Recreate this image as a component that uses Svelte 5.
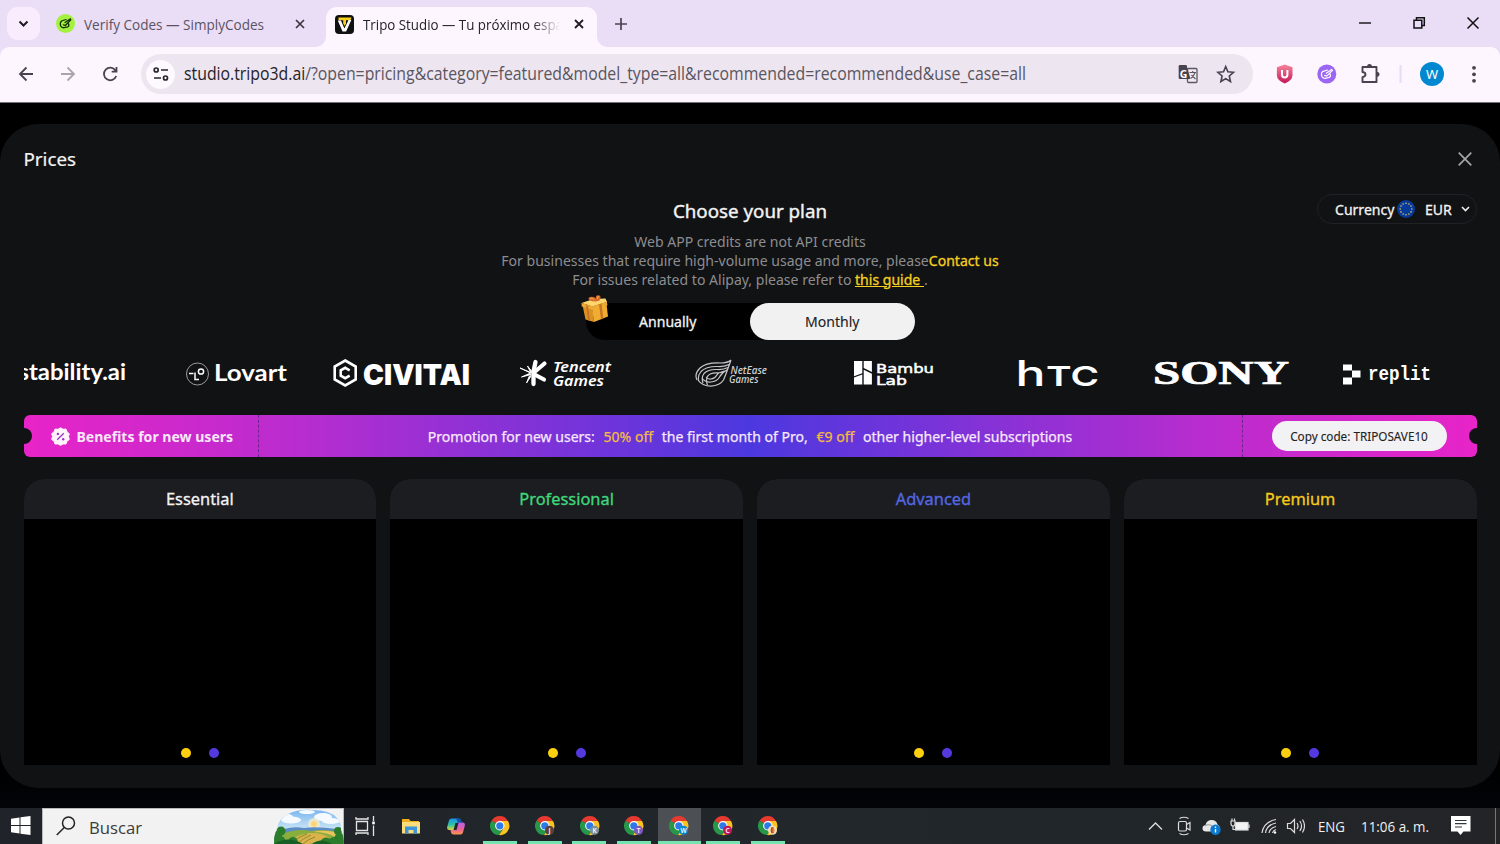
<script>
  const plans = [
    { name: 'Essential', color: '#f4f4f5' },
    { name: 'Professional', color: '#3fd87c' },
    { name: 'Advanced', color: '#5468e0' },
    { name: 'Premium', color: '#f5cb1b' }
  ];
  const profiles = [
    { letter: '', color: '' },
    { letter: 'J', color: '#5d4037' },
    { letter: 'K', color: '#78909c' },
    { letter: 'T', color: '#7e57c2' },
    { letter: 'W', color: '#0288d1', active: true },
    { letter: 'C', color: '#c2185b' },
    { color: '#f3e3b0', figure: true }
  ];
  const rings = [0, 1, 2, 3, 4, 5, 6, 7, 8, 9, 10, 11];
</script>

{#snippet fit(text, width, size, height, color)}
  <svg class="fit" {width} {height} viewBox="0 0 {width} {height}">
    <text x="0" y={height * 0.75} font-size={size} fill={color} textLength={width} lengthAdjust="spacingAndGlyphs">{text}</text>
  </svg>
{/snippet}

<div class="screen">
  <header class="tabs">
    <button class="tab-search" aria-label="Search tabs">
      <svg width="33" height="33" viewBox="7 7 33 33"><path d="M19.500 21.500l4 4 4-4" fill="none" stroke="#1d1b20" stroke-width="2" /></svg>
    </button>
    <div class="tab idle">
      <svg width="19" height="19" viewBox="0 0 19 19">
        <circle cx="9.500" cy="9.500" r="9.500" fill="#a4f13f" />
        <path d="M10 5.500L5.500 7Q3.600 8.800 4.700 12Q5.600 14 8 13.700L12 12.800Q13.600 11.600 12.400 9.600M7.500 10.800l1.800.7 5.500-5.700M9 8.500l5.400-3.600" fill="none" stroke="#16300c" stroke-width="1.300" stroke-linecap="round" stroke-linejoin="round" />
      </svg>
      <span class="idle-title">{@render fit('Verify Codes — SimplyCodes', 180, 14.6, 24, '#5a5363')}</span>
      <svg class="idle-x" width="10" height="10" viewBox="0 0 10 10"><path d="M1 1l8 8M9 1L1 9" stroke="#3a3540" stroke-width="1.700" /></svg>
    </div>
    <div class="tab current">
      <svg width="19" height="19" viewBox="0 0 19 19">
        <rect width="19" height="19" rx="4" fill="#101010" />
        <path d="M3.500 2.500h13l-1 2.800h-12z" fill="#f8d01d" />
        <path d="M2.800 5.500l4.700 11h3.600l5.200-11.500h-2.800L9.400 13.500 5.900 5.500z" fill="#fff" />
        <path d="M8.200 4h2.800v4.500l-1.400 2.500-1.400-2.500z" fill="#f8d01d" />
      </svg>
      <span class="current-title">{@render fit('Tripo Studio — Tu próximo espa', 200, 14.6, 24, '#252229')}</span>
      <svg class="current-x" width="10" height="10" viewBox="0 0 10 10"><path d="M1 1l8 8M9 1L1 9" stroke="#1d1b20" stroke-width="1.800" /></svg>
    </div>
    <svg class="plus" width="12" height="12" viewBox="0 0 12 12"><path d="M6 0v12M0 6h12" stroke="#4a4450" stroke-width="1.700" /></svg>
    <svg class="window" width="121" height="14" viewBox="1359 16 121 14">
      <path d="M1359 23h12" stroke="#111" stroke-width="1.400" />
      <path d="M1414 20.200h7.800v7.800h-7.800zM1416.500 20v-2.200h7.800v7.800h-2.500" fill="none" stroke="#111" stroke-width="1.500" />
      <path d="M1467.500 17.500l11 11M1478.500 17.500l-11 11" stroke="#111" stroke-width="1.500" />
    </svg>
  </header>

  <nav class="toolbar">
    <svg class="nav-icons" width="100" height="20" viewBox="18 64 100 20" fill="none" stroke-width="1.800">
      <path d="M33 74H20.500M26.500 67.500L20 74l6.500 6.500" stroke="#49434f" />
      <path d="M61 74h12.500M67.500 67.500L74 74l-6.500 6.500" stroke="#aaa4ae" />
      <path d="M115.500 70.500A6.300 6.300 0 1 0 116.200 76M116.500 67v4.700h-4.800" stroke="#49434f" />
    </svg>
    <div class="address">
      <div class="site">
        <svg width="16" height="14" viewBox="0 0 16 14" fill="none" stroke="#29252d" stroke-width="1.700"><circle cx="3.200" cy="3" r="2" /><circle cx="12.500" cy="11" r="2" /><path d="M8 3h7M1 11h7" /></svg>
      </div>
      <svg class="fit" width="842" height="26" viewBox="0 0 842 26">
        <text x="0" y="19" font-size="17.500" fill="#5a555f" textLength="842" lengthAdjust="spacingAndGlyphs"><tspan fill="#252229">studio.tripo3d.ai</tspan>/?open=pricing&amp;category=featured&amp;model_type=all&amp;recommended=recommended&amp;use_case=all</text>
      </svg>
      <svg class="addr-icons" width="58" height="22" viewBox="1178 63 58 22">
        <rect x="1187.500" y="68.500" width="9.500" height="14" rx="1" fill="#f0eaf3" stroke="#5b5660" stroke-width="1.300" />
        <path d="M1180 65h6.500l4 14h-10.500q-1.300 0-1.300-1.300V66.300q0-1.300 1.300-1.300z" fill="#49434f" />
        <text x="1179.800" y="77.500" font-size="10.500" font-weight="700" fill="#fff">G</text>
        <path d="M1189.500 72.500h6.500M1192.700 71v1.500M1195 72.800q-1.500 4-4.200 5.400M1191.500 75l4 4" stroke="#5b5660" stroke-width="1.100" fill="none" />
        <path d="M1225.700 66.600l2.200 5.200 5.600.5-4.200 3.700 1.200 5.500-4.800-2.900-4.800 2.900 1.200-5.500-4.200-3.700 5.600-.5z" fill="none" stroke="#49434f" stroke-width="1.600" />
      </svg>
    </div>
    <svg class="extensions" width="206" height="26" viewBox="1275 61 206 26">
      <defs><linearGradient id="shield" x1="0" y1="0" x2="0" y2="1"><stop stop-color="#f4859b" /><stop offset="1" stop-color="#c41658" /></linearGradient></defs>
      <path d="M1284.700 64.500l7.800 2.800v8q0 5-7.800 8.200-7.800-3.200-7.800-8.200v-8z" fill="url(#shield)" />
      <path d="M1282 70v4.800q0 2.700 2.700 2.700t2.700-2.700V70" fill="none" stroke="#fff" stroke-width="2" />
      <circle cx="1326.800" cy="74" r="9.500" fill="#9b66f3" />
      <path d="M1327.500 70l-5 1.600q-1.700 1.600-.7 4.700 1 2.300 3.500 2l4.200-1q1.600-1.200.5-3.400M1324.700 75.400l2 .7 5.800-5.800M1326.300 73.200l5.600-3.900" fill="none" stroke="#fff" stroke-width="1.200" stroke-linecap="round" />
      <path d="M1363 67h13.500v15H1362.500v-4.800q3-.6 3-2.700t-3-2.500V67z" fill="none" stroke="#49434f" stroke-width="1.900" stroke-linejoin="round" />
      <path d="M1367 67q0-3 2.500-3t2.500 3zM1376.500 71.800q3 0 3 2.500t-3 2.500z" fill="#49434f" />
      <path d="M1400.500 65v18" stroke="#e8dbf7" stroke-width="2" />
      <circle cx="1432" cy="74" r="12" fill="#0288d1" />
      <text x="1432" y="79" text-anchor="middle" font-size="13" fill="#fff">W</text>
      <g fill="#49434f"><circle cx="1474" cy="67.800" r="1.900" /><circle cx="1474" cy="74.300" r="1.900" /><circle cx="1474" cy="80.800" r="1.900" /></g>
    </svg>
  </nav>

  <main>
    <section class="modal">
      <div class="head">
        <h1>Prices</h1>
        <svg width="14" height="14" viewBox="0 0 14 14"><path d="M.7.7l12.600 12.600M13.300.7L.7 13.300" stroke="#a5a5a8" stroke-width="1.700" /></svg>
      </div>

      <div class="intro">
        <h2>Choose your plan</h2>
        <p>Web APP credits are not API credits</p>
        <p>For businesses that require high-volume usage and more, please<b>Contact us</b></p>
        <p>For issues related to Alipay, please refer to <u>this guide&nbsp;</u>.</p>
        <div class="currency">
          <span>Currency</span>
          <svg width="18" height="18" viewBox="0 0 18 18"><circle cx="9" cy="9" r="9" fill="#083a9c" />{#each rings as i}<circle cx={9 + 5.8 * Math.cos(i * Math.PI / 6)} cy={9 + 5.8 * Math.sin(i * Math.PI / 6)} r=".8" fill="#d8c85d" />{/each}</svg>
          <span class="eur">EUR</span>
          <svg width="9" height="6" viewBox="0 0 9 6"><path d="M1 1l3.500 3.500L8 1" fill="none" stroke="#eee" stroke-width="1.600" /></svg>
        </div>
      </div>

      <div class="period">
        <div>Annually</div>
        <div class="on">Monthly</div>
        <svg class="gift" width="28" height="28" viewBox="581 293 28 28">
          <path d="M580.500 304l10 3.500 1.500 13.500-8.500-2.500z" fill="#d99324" />
          <path d="M590 307l14.500-4 1.500 12.500-14 5.500z" fill="#f1ac32" />
          <path d="M579.500 302l12-4 12-.5 1.500 3.500-14.500 4.500z" fill="#ffd66c" />
          <path d="M579.500 302l11 3.300v3.500l-10.800-3.300zM590.500 305.300l14.300-4.600.7 3.500-15 4.600z" fill="#eca934" />
          <path d="M584 304l2 .8 2 15-2-.5zM597 303.500l2.500-1 1.800 15-2.200.9z" fill="#c77321" />
          <path d="M593.500 300.500q-7-.5-7-3t5.500-1.500l2 1.500q-1-3.500 2.500-3.300t1 5.300z" fill="#d56a28" />
          <path d="M588 297.500q2-1 4.500 1.300M595.500 298q-.5-3 1.500-2.500" fill="none" stroke="#f3a55d" stroke-width="1" />
        </svg>
      </div>

      <div class="logos">
        <svg style:width="103px" viewBox="24 355 103 36"><text x="18.500" y="380" font-size="22.500" font-weight="700" font-family="Lato" textLength="107.500" lengthAdjust="spacingAndGlyphs">stability.ai</text></svg>
        <svg style:width="102px" style:margin-left="59px" viewBox="186 355 102 36">
          <circle cx="197.500" cy="374" r="11" fill="none" stroke="#aaa" stroke-width=".9" /><path d="M189 373.500h4.500M195 372.500v7h4" fill="none" stroke="#fff" stroke-width="1.500" /><circle cx="201" cy="371.500" r="2.600" fill="none" stroke="#fff" stroke-width="1.500" />
          <text x="214" y="380.500" font-size="23" font-weight="700" font-family="Lato" textLength="73" lengthAdjust="spacingAndGlyphs">Lovart</text>
        </svg>
        <svg style:width="138px" style:margin-left="45px" viewBox="333 355 138 36">
          <path d="M345.200 360.500l10.500 6v13l-10.500 6-10.500-6v-13z" fill="none" stroke="#fff" stroke-width="2.600" /><path d="M349.700 370.300l-4.500-2.500-4.500 2.500v5.400l4.500 2.500 4.500-2.500" fill="none" stroke="#fff" stroke-width="2.500" />
          <text x="363" y="385" font-size="28.500" font-weight="900" font-family="Inter" textLength="107" lengthAdjust="spacingAndGlyphs">CIVITAI</text>
        </svg>
        <svg style:width="92px" style:margin-left="49px" viewBox="520 355 92 36">
          <g stroke="#fff" stroke-linecap="round" fill="#fff"><path d="M535.500 362l-2 9.500M533.500 375v9" stroke-width="4.300" /><path d="M544.500 363.500l-10 8.500M544 379.500l-9.500-5" stroke-width="4.200" /><path d="M532 373l-12-5 10 4.700zM531 374.500l-9.500 2.500 8-3.500zM531 376l-4.500 7 2.700-6.500zM531.500 371l-4-5 3 6z" stroke-width="1" /></g>
          <g font-family="Noto Sans" font-size="15" font-weight="600" font-style="italic"><text x="553" y="371.500" textLength="58" lengthAdjust="spacingAndGlyphs">Tencent</text><text x="553" y="386" textLength="51" lengthAdjust="spacingAndGlyphs">Games</text></g>
        </svg>
        <svg style:width="73px" style:margin-left="83px" viewBox="695 355 73 36">
          <g fill="none" stroke="#c5c5c7" stroke-width="1.200"><path d="M731 360q-3 3-11 3-14-.5-20 5-6 6-3 12M730 364q-5 3-12 2.500-12-.3-17 5-4 5-2 10M728 367.500q-5 2.500-11 2-9-.3-13 4-3 4-1 9.500M725 371.500q-4 1.500-8 1.300-7-.3-9.500 3.500-2 4 0 8.700M698 380q4 6 13 6.200 9-.7 12.500-6.200 3-7 7.500-20M702 378q3 4.500 9 4 6-.5 8.500-5t8-7.500M706 377q2 2.500 5 2 4-.5 5.500-3.500t8-4.500" /></g>
          <g font-family="Noto Sans" font-size="10.500" font-weight="500" font-style="italic" fill="#d4d4d6"><text x="730.500" y="374" textLength="36.500" lengthAdjust="spacingAndGlyphs">NetEase</text><text x="729" y="382.500" textLength="29.500" lengthAdjust="spacingAndGlyphs">Games</text></g>
        </svg>
        <svg style:width="81px" style:margin-left="86px" viewBox="854 355 81 36">
          <path d="M854 361h8.300v12.200l-8.300 3zM854 377.500l8.300-3V384.500H854zM863.700 361h8.200v11l-8.200-4zM863.700 369.800l8.200 4v10.700h-8.200z" fill="#fff" />
          <g font-family="DejaVu Sans" font-size="13" stroke="#fff" stroke-width=".5"><text x="876" y="372.500" textLength="58" lengthAdjust="spacingAndGlyphs">Bambu</text><text x="876" y="384.500" textLength="31" lengthAdjust="spacingAndGlyphs">Lab</text></g>
        </svg>
        <svg style:width="82px" style:margin-left="82px" viewBox="1017 355 82 36"><text x="1015.500" y="386" font-size="35" font-family="Inter" font-weight="500" textLength="30" lengthAdjust="spacingAndGlyphs">h</text><text x="1046" y="386" font-size="27.500" font-family="Inter" font-weight="600" textLength="53" lengthAdjust="spacingAndGlyphs">TC</text></svg>
        <svg style:width="138px" style:margin-left="53px" viewBox="1152 355 138 36"><text x="1153" y="383.500" font-size="33" font-weight="700" font-family="Liberation Serif" stroke="#fff" stroke-width=".7" textLength="136" lengthAdjust="spacingAndGlyphs">SONY</text></svg>
        <svg style:width="90px" style:margin-left="52px" viewBox="1342 355 90 36"><path d="M1343 364.500h9v6h-9zM1352 370.500h8.500v7H1352zM1343 377.500h9v7h-9z" fill="#fff" /><text x="1368" y="379.500" font-size="20" font-weight="700" font-family="Liberation Mono" textLength="63" lengthAdjust="spacingAndGlyphs">replit</text></svg>
      </div>

      <div class="banner">
        <div class="benefit">
          <svg width="19" height="19" viewBox="0 0 19 19"><path d="M9.500.8l2.500 1.500 3-.2 1 2.800 2.300 1.800-.8 2.800.8 2.900-2.300 1.800-1 2.800-3-.1-2.500 1.500L7 16.900l-3 .1-1-2.800-2.300-1.800.8-2.900L.7 6.700 3 4.900l1-2.800 3 .2z" fill="#fff3fc" stroke="#fff3fc" stroke-linejoin="round" /><path d="M6.200 12.800l6.600-6.600" stroke="#9a38c4" stroke-width="1.300" /><circle cx="6.900" cy="6.900" r="1.200" fill="#9a38c4" /><circle cx="12.200" cy="12.200" r="1.200" fill="#9a38c4" /></svg>
          Benefits for new users
        </div>
        <div class="promo">Promotion for new users: <em>50% off</em> the first month of Pro, <em>€9 off</em> other higher-level subscriptions</div>
        <div class="code"><button>Copy code: TRIPOSAVE10</button></div>
      </div>

      <div class="plans">
        {#each plans as plan}
          <article>
            <h3 style:color={plan.color}>{plan.name}</h3>
            <div class="loading"><i></i><i></i></div>
          </article>
        {/each}
      </div>
    </section>
  </main>

  <footer>
    <div class="start"><svg width="20" height="19" viewBox="0 0 20 19"><path d="M0 2.700l8.500-1.200v7.600H0zM9.500 1.300L19.500 0v9.100h-10zM0 10h8.500v7.500L0 16.300zM9.500 10h10v9l-10-1.300z" fill="#fff" /></svg></div>
    <div class="search">
      <svg width="20" height="20" viewBox="0 0 20 20" fill="none" stroke="#222" stroke-width="1.500"><circle cx="12.500" cy="7" r="6" /><path d="M8.300 11.500L.8 19" /></svg>
      <span>{@render fit('Buscar', 53, 17, 26, '#3b3b3b')}</span>
      <svg class="scene" width="70" height="35" viewBox="274 809 70 35">
        <defs>
          <linearGradient id="sky" x1="0" y1="0" x2="0" y2="1"><stop stop-color="#74b3ef" /><stop offset=".65" stop-color="#d5ebf7" /></linearGradient>
          <clipPath id="dome"><path d="M274 844q0-10 3-15 1-10 11-15 11-5 24-4 18 0 25 8 5 6 4 12 3 6 3 14z" /></clipPath>
        </defs>
        <g clip-path="url(#dome)">
          <path d="M274 809h70v35h-70z" fill="url(#sky)" />
          <g fill="#f4faff"><ellipse cx="291" cy="820" rx="10" ry="3.500" /><ellipse cx="288" cy="817" rx="5" ry="3" /><ellipse cx="323" cy="817" rx="9" ry="4" /><ellipse cx="331" cy="821" rx="9" ry="3" /><ellipse cx="307" cy="812" rx="8" ry="2" /></g>
          <circle cx="314" cy="824" r="6" fill="#fff0c0" opacity=".7" /><circle cx="314" cy="824" r="2.800" fill="#ffd36d" />
          <path d="M284 829q10-3 20-1 12-2 32 1v6h-52z" fill="#5b8cc4" />
          <path d="M282 834q15-6 29-3 15-3 30 2v11h-60z" fill="#8aae3e" />
          <path d="M288 844q5-9 22-11 14 0 19 5l-20 6z" fill="#dcb24c" />
          <path d="M291 844q6-7 16-10M297 844q6-6 14-9M303 844q5-5 12-7" stroke="#8d8a2c" fill="none" />
          <path d="M313 832q12-3 25 1l-3 4q-8-5-22-5z" fill="#e9c55f" />
          <g fill="#2b7d2c"><circle cx="281" cy="831" r="4.500" /><circle cx="277" cy="836" r="5" /><circle cx="278" cy="843" r="8" /><circle cx="293" cy="842" r="5" /><circle cx="338" cy="831" r="4" /><circle cx="340" cy="839" r="6" /><circle cx="326" cy="843" r="5.500" /><circle cx="334" cy="843" r="6" /></g>
          <path d="M274 844q14-9 29 0zM312 844q9-7 20 0z" fill="#175f25" />
        </g>
      </svg>
    </div>
    <div class="task view"><svg width="20" height="20" viewBox="0 0 20 20" fill="none" stroke="#e5e5e5" stroke-width="1.300"><path d="M1.500 5.500h11v9h-11zM1 1v2h12V1M1 19v-2h12v2M18.500 0v5M18.500 9.500V20" /><path d="M17.200 5.500h2.600v2.800h-2.600z" fill="#fff" stroke="none" /></svg></div>
    <div class="task"><svg width="18" height="16" viewBox="0 0 18 16"><path d="M0 1h7l1.500 2H17v12H0z" fill="#f1ae1f" /><path d="M0 4h18v11.500H0z" fill="#fddc7b" /><path d="M3 15.500V8.500h12v7h-3.500v-3.500h-5v3.500z" fill="#3d96d5" /></svg></div>
    <div class="task"><svg width="18" height="17" viewBox="0 0 18 17">
      <defs><linearGradient id="cp1" x1="0" y1="0" x2="0" y2="1"><stop stop-color="#1793e8" /><stop offset=".55" stop-color="#2fc3a4" /><stop offset="1" stop-color="#e0d53c" /></linearGradient><linearGradient id="cp2" x1="0" y1="0" x2="0" y2="1"><stop stop-color="#b463f0" /><stop offset=".55" stop-color="#ec5e9c" /><stop offset="1" stop-color="#fb974c" /></linearGradient></defs>
      <path d="M4.500.5h7q2 0 2.500 2l.5 2H10L7.500 12H2.300Q-.6 12 .3 8.500L2 2.500Q2.600.5 4.500.5z" fill="url(#cp1)" /><path d="M13.500 16.500h-7q-2 0-2.500-2L3.500 12H8l2.500-7.500h5.200q2.900 0 2 3.500L16 14.500q-.6 2-2.500 2z" fill="url(#cp2)" /><path d="M8.500 5h3L9.500 12h-3z" fill="#22272d" /><path d="M8 .5h3.500q2 0 2.500 2l.5 2H11q-.5-3-3-4z" fill="#154fb2" />
    </svg></div>
    {#each profiles as p}
      <div class="task running" class:active={p.active}>
        <svg width="24" height="22" viewBox="0 0 24 22">
          <path d="M9.500 10.500L1.500 6A9.300 9.300 0 0 1 18 6.200z" fill="#e6392f" />
          <path d="M1.500 5.800A9.300 9.300 0 0 0 9 20.100L13.500 12.500 9.500 10.500z" fill="#27984a" />
          <path d="M9.700 6h8.300A9.300 9.300 0 0 1 9 20.100l5-7.500z" fill="#fbc322" />
          <circle cx="9.800" cy="10.800" r="4.700" fill="#fff" /><circle cx="9.800" cy="10.800" r="3.600" fill="#2d79e8" />
          {#if p.letter}<circle cx="14.500" cy="15.300" r="4.500" fill={p.color} /><text x="14.500" y="17.600" text-anchor="middle" font-size="6.500" font-weight="600" fill="#fff">{p.letter}</text>{/if}
          {#if p.figure}<circle cx="14.500" cy="15.300" r="4.500" fill={p.color} /><ellipse cx="14.500" cy="15.300" rx="1.800" ry="3.200" fill="#c8372d" /><path d="M14.500 12.100v6.400q1.800-.8 1.800-3.200t-1.800-3.200z" fill="#df8b35" />{/if}
        </svg>
      </div>
    {/each}
    <div class="tray">
      <svg width="157" height="24" viewBox="1148 814 157 24" fill="none" stroke="#ddd" stroke-width="1.200">
        <path d="M1149 829.500l6.500-6.500 6.500 6.500" stroke-width="1.400" />
        <rect x="1178.500" y="821.500" width="8" height="9.500" rx="1.500" /><path d="M1186.500 824.500l3.500-2v7.500l-3.500-2M1179.500 818.500q4.500-2.500 9 0M1179.500 833.500q4.500 2.500 9 0" />
        <path d="M1206 831.500q-3.500 0-3.500-3.300 0-2.700 3-3.200 1.200-5 6.300-5 4.500 0 5.700 4.500 2.500 1 2.500 4t-3 3z" fill="#e7e7e7" stroke="none" /><path d="M1205 826q4-3 8 1" stroke="#aaa" /><circle cx="1215.500" cy="829.800" r="5.200" fill="#0879d2" stroke="none" /><path d="M1215.500 829v3.500M1215.500 826.500v1.400" stroke="#fff" stroke-width="1.400" />
        <rect x="1235.500" y="822.500" width="12.500" height="7.500" fill="#f3f3f3" /><path d="M1249 824.500v3.500M1231 821v2.500q0 2.500 2 2.500t2-2.500V821zM1232 818.500v2.500M1234.500 818.500v2.500M1233 826v3.500h2.500" />
        <path d="M1262 833q1.500-11 14-13.500M1265.500 833q1-8 10.500-10M1269 833q1-5 7-6.500M1272.500 833q.5-2.500 3.500-3.500" /><circle cx="1275" cy="832.500" r="1.200" fill="#fff" stroke="none" />
        <path d="M1287.500 823.500h3l4-4v13l-4-4h-3zM1297 823q2 3 0 6M1299.800 821q3.500 5 0 10M1302.500 819.500q4 6.500 0 13" />
      </svg>
      <span class="lang">{@render fit('ENG', 27, 14.4, 22, '#f0f0f0')}</span>
      <span class="clock">{@render fit('11:06 a. m.', 68, 14.4, 22, '#f0f0f0')}</span>
      <svg class="note" width="20" height="20" viewBox="0 0 20 20"><path d="M0 0h19.500v15.500h-7L9.500 19l-3-3.500H0z" fill="#fff" /><path d="M4 4.500h11.500M4 7.700h11.500M4 11h7" stroke="#33383d" stroke-width="1.200" /></svg>
      <span class="peek"></span>
    </div>
  </footer>
</div>

<style>
  :global(body) { margin: 0; background: #000; }
  .screen { width: 1500px; height: 844px; overflow: hidden; display: flex; flex-direction: column; font-family: 'Noto Sans', sans-serif; color: #f3f3f3; }
  .screen * { box-sizing: border-box; }
  svg { display: block; flex: none; }
  button { border: 0; padding: 0; font: inherit; }
  .fit { font-family: 'Open Sans', 'Noto Sans', sans-serif; overflow: visible; }
  .tabs { height: 47px; flex: none; background: #eaddf6; display: flex; padding: 7px 0 0 7px; }
  .tab-search { width: 33px; height: 33px; border-radius: 11px; background: #f9edfd; }
  .tab { display: flex; align-items: center; height: 33px; }
  .idle { width: 286px; padding-left: 16px; }
  .idle-title { margin-left: 9px; }
  .idle-x { margin-left: 31px; }
  .current { width: 271px; height: 40px; padding: 0 0 6px 9px; border-radius: 11px 11px 0 0; background: #fef6fe; position: relative; }
  .current::before, .current::after { content: ''; position: absolute; bottom: 0; width: 10px; height: 10px; }
  .current::before { left: -10px; background: radial-gradient(circle at 0 0, transparent 9.5px, #fef6fe 10px); }
  .current::after { right: -10px; background: radial-gradient(circle at 100% 0, transparent 9.5px, #fef6fe 10px); }
  .current-title { margin-left: 9px; width: 197px; overflow: hidden; mask-image: linear-gradient(90deg, #000 170px, transparent 197px); }
  .current-x { margin-left: 14px; }
  .plus { margin: 11px 0 0 18px; }
  .window { margin: 9px 0 0 732px; }
  .toolbar { height: 56px; flex: none; background: #fef6fe; border-bottom: 1px solid #77717a; display: flex; padding: 7px 0 0 18px; position: relative; }
  .toolbar::before, .toolbar::after { content: ''; position: absolute; top: 0; width: 9px; height: 9px; }
  .toolbar::before { left: 0; background: radial-gradient(circle at 100% 100%, transparent 8.5px, #eaddf6 9px); }
  .toolbar::after { right: 0; background: radial-gradient(circle at 0 100%, transparent 8.5px, #eaddf6 9px); }
  .nav-icons { margin-top: 10px; }
  .address { width: 1112px; height: 40px; margin-left: 23px; border-radius: 20px; background: #ede5ef; display: flex; align-items: center; padding-left: 5px; }
  .site { width: 29px; height: 29px; border-radius: 50%; background: #fef8ff; display: grid; place-items: center; margin-right: 9px; }
  .addr-icons { margin-left: 152px; }
  .extensions { margin: 7px 0 0 22px; }
  main { height: 705px; flex: none; padding-top: 21px; background: linear-gradient(#000 660px, #030408); }
  .modal { height: 664px; border-radius: 38px; background: #111214; padding: 0 23.500px; }
  .head { height: 70px; display: flex; justify-content: space-between; align-items: center; padding-right: 4.500px; }
  h1 { margin: 0; font-size: 18.750px; font-weight: 400; line-height: 26px; -webkit-text-stroke: .2px; }
  .intro { position: relative; height: 109px; text-align: center; }
  h2 { margin: 0 0 9px; padding-top: 4px; font-size: 18.750px; font-weight: 400; line-height: 26px; -webkit-text-stroke: .4px; }
  p { margin: 0; font-size: 14.060px; line-height: 18.750px; color: #8d8d90; }
  p b, p u { color: #f5cf20; font-weight: 400; -webkit-text-stroke: .3px; }
  .currency { position: absolute; right: 0; top: 0; width: 160px; height: 30px; border: 1px solid #202124; border-radius: 15px; display: flex; align-items: center; padding-left: 17.500px; font-size: 14.060px; -webkit-text-stroke: .3px; }
  .currency svg { margin-left: 3px; }
  .eur { margin: 0 8px 0 9.500px; }
  .currency .eur + svg { margin-left: 1px; }
  .period { position: relative; width: 329px; height: 37px; margin: 0 auto; background: #000; border-radius: 19px; display: flex; font-size: 14.060px; line-height: 37px; text-align: center; -webkit-text-stroke: .3px; }
  .period div { width: 50%; }
  .on { border-radius: 19px; background: #f1f1f2; color: #202124; -webkit-text-stroke: .1px; }
  .gift { position: absolute; left: -2.500px; top: -9px; overflow: visible; }
  .logos { display: flex; height: 36px; margin-top: 15px; padding-left: .5px; }
  .logos svg { height: 36px; overflow: hidden; fill: #fff; }
  .banner { height: 42px; margin-top: 24px; border-radius: 6px; display: flex; align-items: center; background: linear-gradient(90deg, #e824c8, #b52dcf 20%, #4c38df 50%, #b52dcf 80%, #e824c8); position: relative; overflow: hidden; font-size: 14.060px; color: #f8e8fc; }
  .banner::before, .banner::after { content: ''; position: absolute; width: 16px; height: 16px; top: 13px; border-radius: 50%; background: #111214; }
  .banner::before { left: -8px; } .banner::after { right: -8px; }
  .benefit { width: 235px; height: 42px; border-right: 1px dashed #6f2489; display: flex; align-items: center; padding-left: 27px; gap: 7px; font-weight: 700; }
  .promo { flex: 1; text-align: center; -webkit-text-stroke: .25px; }
  em { font-style: normal; color: #f3bc42; margin: 0 5px; }
  .code { width: 235px; height: 42px; border-left: 1px dashed #6f2489; padding: 6px 0 0 29px; }
  .code button { width: 175px; height: 30px; background: #f2f1f3; border-radius: 15px; font-size: 11.720px; font-weight: 400; color: #222; -webkit-text-stroke: .1px; }
  .plans { display: grid; grid-template-columns: repeat(4, 1fr); gap: 14px; margin-top: 22px; }
  article { height: 286px; background: #000; border-radius: 20px 20px 0 0; overflow: hidden; display: flex; flex-direction: column; }
  h3 { margin: 0; height: 40px; background: #1c1d21; text-align: center; line-height: 40px; font-size: 16.400px; font-weight: 400; -webkit-text-stroke: .3px; }
  .loading { flex: 1; display: flex; justify-content: center; align-items: flex-end; gap: 18px; padding-bottom: 7px; }
  i { width: 10px; height: 10px; border-radius: 50%; background: #fdd00f; }
  i + i { background: #5439df; }
  footer { height: 36px; background: linear-gradient(90deg, #202329, #21272a 55%, #202629 75%, #242427); display: flex; flex: none; }
  .start { width: 42px; padding: 8px 0 0 11px; }
  .search { width: 302px; border: 1px solid #b9b9ba; border-bottom: 0; background: #f2f2f2; display: flex; padding: 7px 0 0 13px; }
  .search span { margin: -2px 0 0 13px; }
  .search .scene { margin: -7px 0 0 132px; }
  .task { width: 44.600px; height: 36px; display: flex; justify-content: center; padding-top: 10px; }
  .view { padding: 8px 3px 0 0; }
  .task:nth-child(3) { width: 45px; }
  .running { padding: 7px 0 0 4px; position: relative; }
  .running::after { content: ''; position: absolute; bottom: 0; left: 5px; width: 34px; height: 3px; background: #75e4b0; }
  .active { background: linear-gradient(#4c5054, #4c5054) 1px 0 / 43px 100% no-repeat; }
  .active::after { left: 1px; width: 43px; }
  .tray { margin-left: auto; display: flex; padding-top: 6px; }
  .lang { margin: 1px 0 0 13px; } .clock { margin: 1px 0 0 16px; }
  .note { margin: 2px 0 0 22px; } .peek { width: 5px; border-left: 1px solid #777; margin: -6px 0 0 24px; }
</style>
